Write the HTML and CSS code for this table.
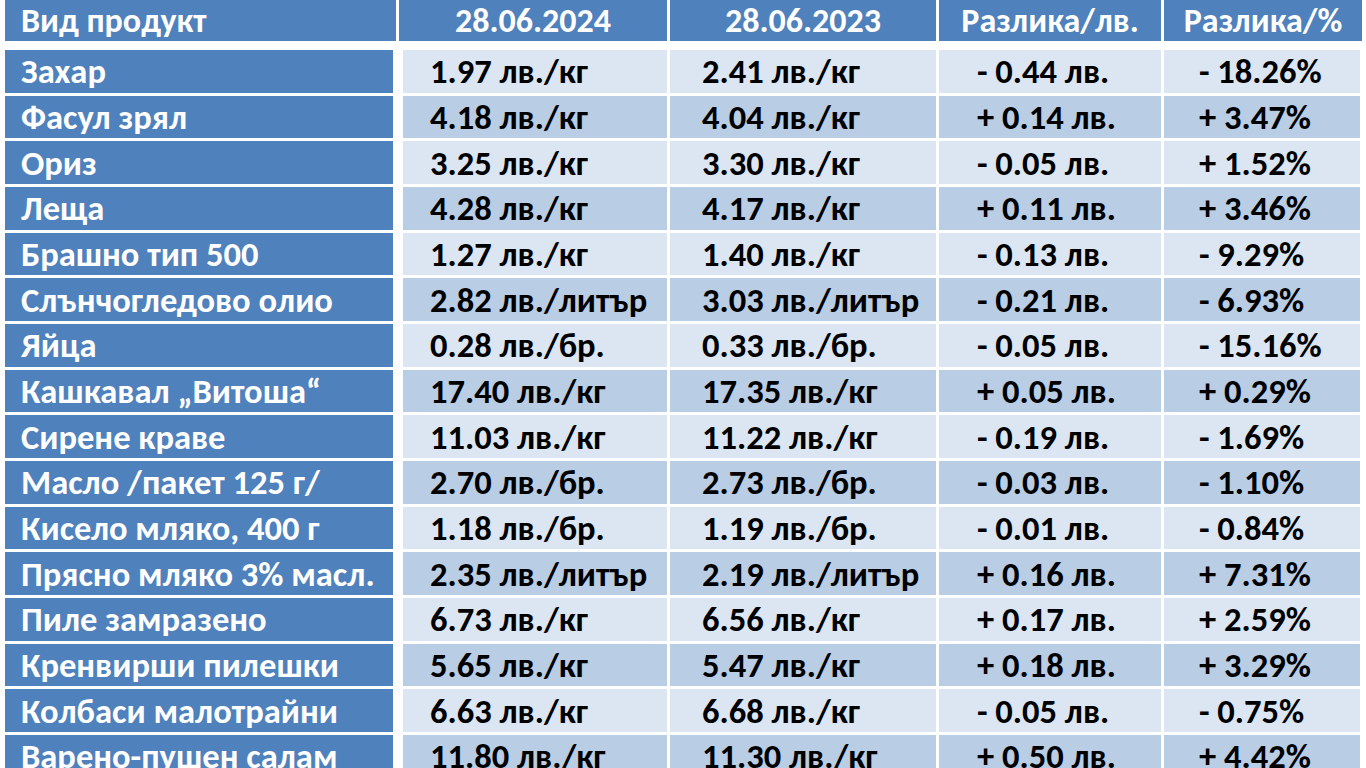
FILE: index.html
```html
<!DOCTYPE html>
<html lang="bg">
<head>
<meta charset="utf-8">
<title>Цени на продукти</title>
<link rel="stylesheet" href="styles.css">
</head>
<body>
<div class="table">
  <div class="row head">
    <div class="cell c1">Вид продукт</div>
    <div class="cell c2">28.06.2024</div>
    <div class="cell c3">28.06.2023</div>
    <div class="cell c4">Разлика/лв.</div>
    <div class="cell c5">Разлика/%</div>
  </div>
  <div class="row light"><div class="cell c1">Захар</div><div class="cell c2">1.97 лв./кг</div><div class="cell c3">2.41 лв./кг</div><div class="cell c4">- 0.44 лв.</div><div class="cell c5">- 18.26%</div></div>
  <div class="row dark"><div class="cell c1">Фасул зрял</div><div class="cell c2">4.18 лв./кг</div><div class="cell c3">4.04 лв./кг</div><div class="cell c4">+ 0.14 лв.</div><div class="cell c5">+ 3.47%</div></div>
  <div class="row light"><div class="cell c1">Ориз</div><div class="cell c2">3.25 лв./кг</div><div class="cell c3">3.30 лв./кг</div><div class="cell c4">- 0.05 лв.</div><div class="cell c5">+ 1.52%</div></div>
  <div class="row dark"><div class="cell c1">Леща</div><div class="cell c2">4.28 лв./кг</div><div class="cell c3">4.17 лв./кг</div><div class="cell c4">+ 0.11 лв.</div><div class="cell c5">+ 3.46%</div></div>
  <div class="row light"><div class="cell c1">Брашно тип 500</div><div class="cell c2">1.27 лв./кг</div><div class="cell c3">1.40 лв./кг</div><div class="cell c4">- 0.13 лв.</div><div class="cell c5">- 9.29%</div></div>
  <div class="row dark"><div class="cell c1">Слънчогледово олио</div><div class="cell c2">2.82 лв./литър</div><div class="cell c3">3.03 лв./литър</div><div class="cell c4">- 0.21 лв.</div><div class="cell c5">- 6.93%</div></div>
  <div class="row light"><div class="cell c1">Яйца</div><div class="cell c2">0.28 лв./бр.</div><div class="cell c3">0.33 лв./бр.</div><div class="cell c4">- 0.05 лв.</div><div class="cell c5">- 15.16%</div></div>
  <div class="row dark"><div class="cell c1">Кашкавал „Витоша“</div><div class="cell c2">17.40 лв./кг</div><div class="cell c3">17.35 лв./кг</div><div class="cell c4">+ 0.05 лв.</div><div class="cell c5">+ 0.29%</div></div>
  <div class="row light"><div class="cell c1">Сирене краве</div><div class="cell c2">11.03 лв./кг</div><div class="cell c3">11.22 лв./кг</div><div class="cell c4">- 0.19 лв.</div><div class="cell c5">- 1.69%</div></div>
  <div class="row dark"><div class="cell c1">Масло /пакет 125 г/</div><div class="cell c2">2.70 лв./бр.</div><div class="cell c3">2.73 лв./бр.</div><div class="cell c4">- 0.03 лв.</div><div class="cell c5">- 1.10%</div></div>
  <div class="row light"><div class="cell c1">Кисело мляко, 400 г</div><div class="cell c2">1.18 лв./бр.</div><div class="cell c3">1.19 лв./бр.</div><div class="cell c4">- 0.01 лв.</div><div class="cell c5">- 0.84%</div></div>
  <div class="row dark"><div class="cell c1">Прясно мляко 3% масл.</div><div class="cell c2">2.35 лв./литър</div><div class="cell c3">2.19 лв./литър</div><div class="cell c4">+ 0.16 лв.</div><div class="cell c5">+ 7.31%</div></div>
  <div class="row light"><div class="cell c1">Пиле замразено</div><div class="cell c2">6.73 лв./кг</div><div class="cell c3">6.56 лв./кг</div><div class="cell c4">+ 0.17 лв.</div><div class="cell c5">+ 2.59%</div></div>
  <div class="row dark"><div class="cell c1">Кренвирши пилешки</div><div class="cell c2">5.65 лв./кг</div><div class="cell c3">5.47 лв./кг</div><div class="cell c4">+ 0.18 лв.</div><div class="cell c5">+ 3.29%</div></div>
  <div class="row light"><div class="cell c1">Колбаси малотрайни</div><div class="cell c2">6.63 лв./кг</div><div class="cell c3">6.68 лв./кг</div><div class="cell c4">- 0.05 лв.</div><div class="cell c5">- 0.75%</div></div>
  <div class="row dark"><div class="cell c1">Варено-пушен салам</div><div class="cell c2">11.80 лв./кг</div><div class="cell c3">11.30 лв./кг</div><div class="cell c4">+ 0.50 лв.</div><div class="cell c5">+ 4.42%</div></div>
</div>
</body>
</html>
```
FILE: styles.css
```css
html, body {
  margin: 0;
  padding: 0;
  background: #ffffff;
  overflow: hidden;
}
body {
  width: 1366px;
  height: 768px;
  font-family: Carlito, "Open Sans", "Liberation Sans", sans-serif;
  font-weight: 700;
}
.table {
  display: flex;
  flex-direction: column;
  gap: 3px;
  padding-left: 5px;
}
.row {
  display: grid;
  grid-template-columns: 388px 271px 266px 222px 196px;
  column-gap: 3px;
  height: 42.67px;
}
.row .c2 { margin-left: 7px; }
.head {
  grid-template-columns: 391px 268px 266px 222px 198px;
  height: 41px;
  margin-bottom: 6px;
}
.cell {
  display: flex;
  align-items: center;
  white-space: nowrap;
  font-size: 34.5px;
  color: #000;
}
.head .cell {
  background: #4f81bd;
  color: #fff;
  font-size: 34px;
  justify-content: center;
}
.head .c1 { justify-content: flex-start; padding-left: 16px; }
.head .c2 { margin-left: 0; }
.c1 {
  background: #4f81bd;
  color: #fff;
  padding-left: 16px;
}
.light .c2, .light .c3, .light .c4, .light .c5 { background: #dce6f2; }
.dark .c2, .dark .c3, .dark .c4, .dark .c5 { background: #b9cde5; }
.light .c2, .dark .c2 { padding-left: 27px; }
.light .c3, .dark .c3 { padding-left: 32px; }
.light .c4, .dark .c4 { padding-left: 38px; }
.light .c5, .dark .c5 { padding-left: 35px; }
```
